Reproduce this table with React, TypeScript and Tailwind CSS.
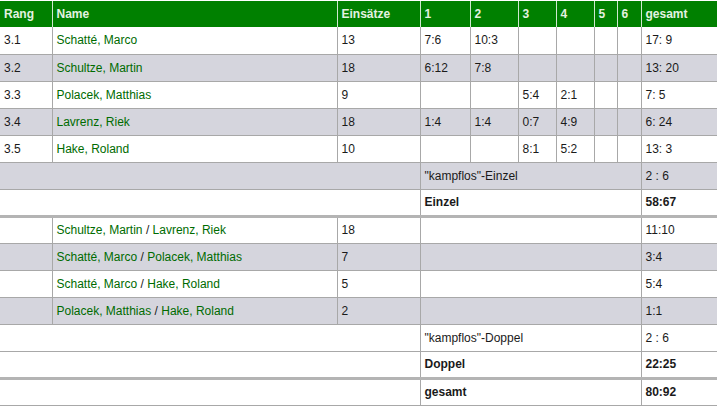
import React from 'react';

type SingleRow = {
  rang: string;
  name: string;
  einsaetze: string;
  sets: string[];
  gesamt: string;
};

type DoubleRow = {
  name: [string, string];
  einsaetze: string;
  gesamt: string;
};

const singles: SingleRow[] = [
  { rang: '3.1', name: 'Schatté, Marco', einsaetze: '13', sets: ['7:6', '10:3', '', '', '', ''], gesamt: '17: 9' },
  { rang: '3.2', name: 'Schultze, Martin', einsaetze: '18', sets: ['6:12', '7:8', '', '', '', ''], gesamt: '13: 20' },
  { rang: '3.3', name: 'Polacek, Matthias', einsaetze: '9', sets: ['', '', '5:4', '2:1', '', ''], gesamt: '7: 5' },
  { rang: '3.4', name: 'Lavrenz, Riek', einsaetze: '18', sets: ['1:4', '1:4', '0:7', '4:9', '', ''], gesamt: '6: 24' },
  { rang: '3.5', name: 'Hake, Roland', einsaetze: '10', sets: ['', '', '8:1', '5:2', '', ''], gesamt: '13: 3' },
];

const doubles: DoubleRow[] = [
  { name: ['Schultze, Martin', 'Lavrenz, Riek'], einsaetze: '18', gesamt: '11:10' },
  { name: ['Schatté, Marco', 'Polacek, Matthias'], einsaetze: '7', gesamt: '3:4' },
  { name: ['Schatté, Marco', 'Hake, Roland'], einsaetze: '5', gesamt: '5:4' },
  { name: ['Polacek, Matthias', 'Hake, Roland'], einsaetze: '2', gesamt: '1:1' },
];

const headers = ['Rang', 'Name', 'Einsätze', '1', '2', '3', '4', '5', '6', 'gesamt'];
const widths = [52, 285, 83, 50, 48, 38, 38, 23, 24, 80];

const td = 'h-[27px] px-1 align-middle border-b border-l border-[#a8a8a8] first:border-l-0';
const thick = 'h-[26px] border-b-[3px] border-b-[#b4b4b4]';
const rowBg = (i: number) => (i % 2 === 1 ? 'bg-[#d5d5dd]' : 'bg-white');

export default function App() {
  return (
    <div className="w-[717px] h-[406px] overflow-hidden bg-white pt-px font-['Liberation_Sans',Arial,sans-serif] text-[12px] text-[#1a1a1a]">
      <table className="table-fixed border-collapse w-[721px]">
        <colgroup>
          {widths.map((w, i) => (
            <col key={i} style={{ width: w }} />
          ))}
        </colgroup>
        <thead>
          <tr className="bg-[#008000]">
            {headers.map((h) => (
              <th
                key={h}
                className="h-[26px] px-1 text-left font-bold text-[#e4f2e0] border-l border-[#cfe8cf] first:border-l-0"
              >
                {h}
              </th>
            ))}
          </tr>
        </thead>
        <tbody>
          {singles.map((r, i) => (
            <tr key={r.rang} className={rowBg(i)}>
              <td className={td}>{r.rang}</td>
              <td className={`${td} text-[#006b00]`}>{r.name}</td>
              <td className={td}>{r.einsaetze}</td>
              {r.sets.map((s, j) => (
                <td key={j} className={td}>
                  {s}
                </td>
              ))}
              <td className={td}>{r.gesamt}</td>
            </tr>
          ))}
          <tr className="bg-[#d5d5dd]">
            <td colSpan={3} className={td}></td>
            <td colSpan={6} className={td}>"kampflos"-Einzel</td>
            <td className={td}>2 : 6</td>
          </tr>
          <tr className="bg-white">
            <td colSpan={3} className={`${td} ${thick}`}></td>
            <td colSpan={6} className={`${td} ${thick} font-bold`}>Einzel</td>
            <td className={`${td} ${thick} font-bold`}>58:67</td>
          </tr>
          {doubles.map((d, i) => (
            <tr key={i} className={rowBg(i)}>
              <td className={td}></td>
              <td className={`${td} text-[#006b00]`}>
                {d.name[0]} <span className="text-[#1a1a1a]">/</span> {d.name[1]}
              </td>
              <td className={td}>{d.einsaetze}</td>
              <td colSpan={6} className={td}></td>
              <td className={td}>{d.gesamt}</td>
            </tr>
          ))}
          <tr className="bg-white">
            <td colSpan={3} className={td}></td>
            <td colSpan={6} className={td}>"kampflos"-Doppel</td>
            <td className={td}>2 : 6</td>
          </tr>
          <tr className="bg-white">
            <td colSpan={3} className={`${td} ${thick}`}></td>
            <td colSpan={6} className={`${td} ${thick} font-bold`}>Doppel</td>
            <td className={`${td} ${thick} font-bold`}>22:25</td>
          </tr>
          <tr className="bg-white">
            <td colSpan={3} className={td}></td>
            <td colSpan={6} className={`${td} font-bold`}>gesamt</td>
            <td className={`${td} font-bold`}>80:92</td>
          </tr>
        </tbody>
      </table>
    </div>
  );
}
